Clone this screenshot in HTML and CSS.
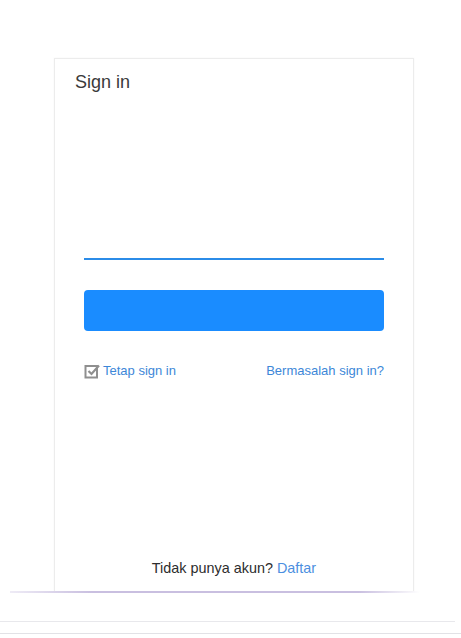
FILE: index.html
```html
<!DOCTYPE html>
<html>
<head>
<meta charset="utf-8">
<link rel="stylesheet" href="styles.css">
</head>
<body>
<div class="page">
  <div class="card">
    <h1 class="title">Sign in</h1>
    <div class="form">
      <div class="input"></div>
      <div class="button"></div>
      <div class="row">
        <a class="remember">
          <svg class="check" width="16" height="16" viewBox="0 0 16 16">
            <rect x="1.5" y="3" width="11.5" height="11.5" fill="none" stroke="#8f8f8f" stroke-width="2"/>
            <path d="M4.5 8 L7.5 11 L15 2.5" fill="none" stroke="#8f8f8f" stroke-width="2.2"/>
          </svg>
          <span>Tetap sign in</span>
        </a>
        <a class="trouble">Bermasalah sign in?</a>
      </div>
    </div>
    <div class="footer">Tidak punya akun? <a class="link">Daftar</a></div>
  </div>
  <div class="shade"></div>
  <div class="line one"></div>
  <div class="line two"></div>
</div>
</body>
</html>
```
FILE: styles.css
```css
html, body {
  margin: 0;
  padding: 0;
  background: #ffffff;
  font-family: "Liberation Sans", Arial, sans-serif;
}
.page {
  width: 461px;
  height: 638px;
  padding-top: 58px;
  box-sizing: border-box;
}
.card {
  margin-left: 54px;
  width: 360px;
  height: 533px;
  box-sizing: border-box;
  border: 1px solid #ececec;
  border-bottom: none;
  display: flex;
  flex-direction: column;
  box-shadow: 0 0 2px rgba(0,0,0,0.04);
}
.title {
  margin: 0;
  padding: 12px 0 0 20px;
  font-size: 18px;
  line-height: 22px;
  font-weight: normal;
  color: #3a3a3a;
}
.form {
  padding: 0 29px;
  display: flex;
  flex-direction: column;
}
.input {
  margin-top: 125px;
  height: 40px;
  border-bottom: 2px solid #2b8ce8;
}
.button {
  margin-top: 30px;
  height: 41px;
  background: #1a8cff;
  border-radius: 4px;
}
.row {
  margin-top: 31px;
  display: flex;
  justify-content: space-between;
  align-items: center;
  font-size: 13px;
  line-height: 18px;
  color: #3d87d8;
}
.remember {
  display: flex;
  align-items: center;
  gap: 3px;
}
.check {
  display: block;
}
.footer {
  margin-top: auto;
  padding-bottom: 14px;
  text-align: center;
  font-size: 14.4px;
  line-height: 18px;
  color: #2d2d2d;
}
.link {
  color: #4c8fe0;
}
.shade {
  margin-left: 10px;
  width: 410px;
  height: 2px;
  background: linear-gradient(to right, rgba(200,190,225,0.3), #c9bfe0 20%, #c9bfe0 85%, rgba(200,190,225,0));
}
.line {
  height: 1px;
  background: #e8e8ec;
}
.line.one {
  margin-top: 28px;
  margin-left: 0;
  width: 455px;
}
.line.two {
  margin-top: 11px;
  width: 461px;
  background: #e2e2e6;
}
```
